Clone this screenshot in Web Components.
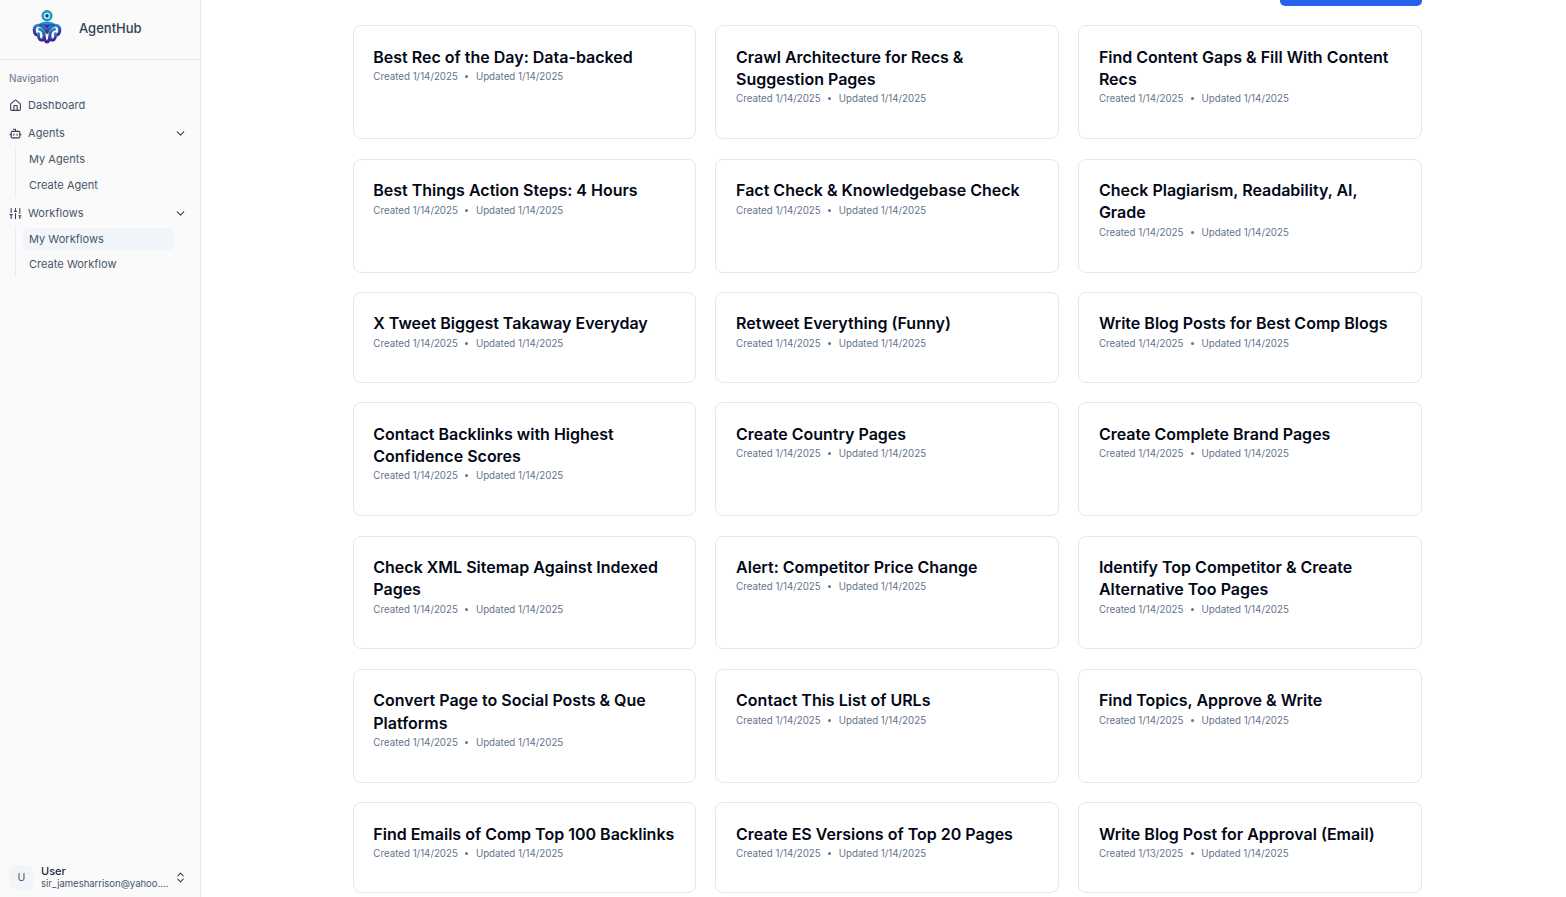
<!DOCTYPE html>
<html>
<head>
<meta charset="utf-8">
<title>AgentHub</title>
<style>
  html, body { margin: 0; height: 100%; overflow: hidden; background: #fff; }
  body { font-family: Inter, "Liberation Sans", sans-serif; }
</style>
</head>
<body>
<app-shell>
  <side-bar slot="side">
    <nav-item icon="home">Dashboard</nav-item>
    <nav-item icon="bot" chevron>Agents</nav-item>
    <nav-group>
      <nav-sub>My Agents</nav-sub>
      <nav-sub>Create Agent</nav-sub>
    </nav-group>
    <nav-item icon="sliders" chevron>Workflows</nav-item>
    <nav-group>
      <nav-sub active>My Workflows</nav-sub>
      <nav-sub>Create Workflow</nav-sub>
    </nav-group>
  </side-bar>
  <workflow-grid></workflow-grid>
</app-shell>

<script>
const ICONS = {
  home: `<path d="M15 21v-8a1 1 0 0 0-1-1h-4a1 1 0 0 0-1 1v8"/><path d="M3 10a2 2 0 0 1 .709-1.528l7-5.999a2 2 0 0 1 2.582 0l7 5.999A2 2 0 0 1 21 10v9a2 2 0 0 1-2 2H5a2 2 0 0 1-2-2z"/>`,
  bot: `<path d="M12 8V4H8"/><rect width="16" height="12" x="4" y="8" rx="2"/><path d="M2 14h2"/><path d="M20 14h2"/><path d="M15 13v2"/><path d="M9 13v2"/>`,
  sliders: `<path d="M4 21v-7M4 10V3M12 21v-9M12 8V3M20 21v-5M20 12V3M2 14h4M10 8h4M18 16h4"/>`,
  chevron: `<path d="m6 9 6 6 6-6"/>`,
  updown: `<path d="m7 15 5 5 5-5"/><path d="m7 9 5-5 5 5"/>`
};
const icon = (name, size) => `<svg width="${size}" height="${size}" viewBox="0 0 24 24" fill="none" stroke="currentColor" stroke-width="2" stroke-linecap="round" stroke-linejoin="round">${ICONS[name]}</svg>`;

customElements.define('app-shell', class extends HTMLElement{
  constructor(){
    super();
    this.shadow = this.attachShadow({mode: 'open'});
    this.shadow.innerHTML = `
      <style>
        :host{ display: flex; height: 897px; overflow: hidden; }
        main{ flex: 1; min-width: 0; padding: 0 144.300px 0 151.700px; }
      </style>
      <slot name="side"></slot>
      <main><slot></slot></main>
    `;
  }
});

customElements.define('side-bar', class extends HTMLElement{
  constructor(){
    super();
    this.shadow = this.attachShadow({mode: 'open'});
    this.shadow.innerHTML = `
      <style>
        :host{
          display: flex; flex-direction: column; flex: none; box-sizing: border-box;
          width: 201px; height: 897px; background: #fafafa; border-right: 1px solid #e2e8f0;
        }
        header{
          display: flex; align-items: center; gap: 17px; box-sizing: border-box;
          height: 60px; padding: 0 0 4px 32px; border-bottom: 1px solid #e2e8f0;
          font-size: 13px; font-weight: 500; color: #334155;
        }
        header svg{ margin-bottom: 3px; flex: none; }
        .label{ box-sizing: border-box; padding: 12px 9px 0; height: 30px; font-size: 9.900px; line-height: 13px; color: #64748b; }
        nav{ flex: 1; padding: 0 9px; display: flex; flex-direction: column; }
        footer{ display: flex; align-items: center; padding: 0 13px 0 9px; height: 40px; gap: 7px; color: #334155; }
        .avatar{
          width: 25px; height: 25px; flex: none; border-radius: 8px; background: #f1f5f9;
          display: flex; align-items: center; justify-content: center; font-size: 10.500px; color: #475569;
        }
        .who{ flex: 1; min-width: 0; }
        .name{ font-size: 11px; line-height: 12px; font-weight: 500; color: #1e293b; }
        .mail{ font-size: 9.500px; line-height: 13px; color: #475569; white-space: nowrap; }
        footer svg{ flex: none; display: block; }
      </style>
      <header>
        <svg width="30" height="37" viewBox="0 0 32 38">
          <defs>
            <linearGradient id="lg" x1="0" y1="0" x2="0" y2="1">
              <stop offset="0" stop-color="#2a8fc9"/>
              <stop offset="0.5" stop-color="#2748a8"/>
              <stop offset="1" stop-color="#43209a"/>
            </linearGradient>
          </defs>
          <circle cx="16" cy="7.500" r="6" fill="#1d9cc4"/>
          <circle cx="16" cy="7.500" r="3.300" fill="#d9f0f8"/>
          <circle cx="16" cy="7.500" r="1.900" fill="#0e3f7a"/>
          <path d="M11 15q5-2.500 10 0l2 5h-14z" fill="#2a86c4"/>
          <g fill="none" stroke="url(#lg)" stroke-width="3.200" stroke-linecap="round">
            <path d="M16 25C13 19 8 16.500 5 18 2.500 19.500 2 23 3 26c.7 2 3 2.800 4 1"/>
            <path d="M16 25c3-6 8-8.500 11-7 2.500 1.500 3 5 2 8-.7 2-3 2.800-4 1"/>
            <path d="M8 22c3 .5 5 3.500 5 7.500 0 3 1.500 6 3 6s3-3 3-6c0-4 2-7 5-7.500"/>
            <path d="M9 17c3-2 5-1 7 2 2-3 4-4 7-2"/>
            <path d="M7 27c-.500 3 .500 6 3 6.500 2 .300 3-1 2.500-2.500"/>
            <path d="M25 27c.500 3-.500 6-3 6.500-2 .300-3-1-2.500-2.500"/>
          </g>
        </svg>
        <span>AgentHub</span>
      </header>
      <div class="label">Navigation</div>
      <nav><slot></slot></nav>
      <footer>
        <div class="avatar">U</div>
        <div class="who">
          <div class="name">User</div>
          <div class="mail">sir_jamesharrison@yahoo....</div>
        </div>
        ${icon('updown', 13)}
      </footer>
    `;
  }
});

customElements.define('nav-item', class extends HTMLElement{
  constructor(){
    super();
    this.shadow = this.attachShadow({mode: 'open'});
    this.shadow.innerHTML = `
      <style>
        :host{
          display: flex; align-items: center; gap: 6px; height: 26px; margin-top: 2px; flex: none;
          font-size: 11px; color: #475569; letter-spacing: 0.05px;
        }
        span{ flex: 1; }
        svg{ display: block; flex: none; color: #334155; }
        .chev{ margin-right: 4px; }
      </style>
      ${icon(this.getAttribute('icon'), 13)}
      <span><slot></slot></span>
      ${this.hasAttribute('chevron') ? icon('chevron', 13).replace('<svg', '<svg class="chev"') : ''}
    `;
  }
});

customElements.define('nav-group', class extends HTMLElement{
  constructor(){
    super();
    this.shadow = this.attachShadow({mode: 'open'});
    this.shadow.innerHTML = `
      <style>
        :host{
          display: flex; flex-direction: column; margin-left: 6px; padding-left: 7px;
          border-left: 1px solid #e8ecf1; width: 151px; box-sizing: content-box;
        }
      </style>
      <slot></slot>
    `;
  }
});

customElements.define('nav-sub', class extends HTMLElement{
  constructor(){
    super();
    this.shadow = this.attachShadow({mode: 'open'});
    this.shadow.innerHTML = `
      <style>
        :host{
          display: flex; align-items: center; height: 26px; padding-left: 6px;
          font-size: 11px; color: #475569; letter-spacing: 0.03px;
        }
        :host([active]){ height: 22px; margin: 2px 0 1px; background: #f1f5f9; border-radius: 5px; }
      </style>
      <slot></slot>
    `;
  }
});

customElements.define('workflow-card', class extends HTMLElement{
  constructor(){
    super();
    this.shadow = this.attachShadow({mode: 'open'});
    this.shadow.innerHTML = `
      <style>
        :host{
          display: block; box-sizing: border-box; padding: 19.500px 19.600px; background: #fff;
          border: 1px solid #e2e8f0; border-radius: 8px;
        }
        h3{ margin: 0; font-size: 16px; line-height: 22.200px; font-weight: 600; color: #020817; }
        .meta{ display: flex; align-items: center; height: 17.400px; font-size: 9.750px; color: #64748b; white-space: nowrap; }
        i{ width: 3px; height: 3px; border-radius: 50%; background: #64748b; margin: 0 7.500px; }
      </style>
      <h3><slot></slot></h3>
      <div class="meta">
        <span id="created"></span><i></i><span id="updated"></span>
      </div>
    `;
  }

  connectedCallback(){
    this.shadow.querySelector('#created').textContent = 'Created ' + this.getAttribute('created');
    this.shadow.querySelector('#updated').textContent = 'Updated ' + this.getAttribute('updated');
  }
});

const WORKFLOWS = [
  'Best Rec of the Day: Data-backed', 'Crawl Architecture for Recs & Suggestion Pages', 'Find Content Gaps & Fill With Content Recs',
  'Best Things Action Steps: 4 Hours', 'Fact Check & Knowledgebase Check', 'Check Plagiarism, Readability, AI, Grade',
  'X Tweet Biggest Takaway Everyday', 'Retweet Everything (Funny)', 'Write Blog Posts for Best Comp Blogs',
  'Contact Backlinks with Highest Confidence Scores', 'Create Country Pages', 'Create Complete Brand Pages',
  'Check XML Sitemap Against Indexed Pages', 'Alert: Competitor Price Change', 'Identify Top Competitor & Create Alternative Too Pages',
  'Convert Page to Social Posts & Que Platforms', 'Contact This List of URLs', 'Find Topics, Approve & Write',
  'Find Emails of Comp Top 100 Backlinks', 'Create ES Versions of Top 20 Pages', 'Write Blog Post for Approval (Email)'
];

customElements.define('workflow-grid', class extends HTMLElement{
  constructor(){
    super();
    this.shadow = this.attachShadow({mode: 'open'});
    this.shadow.innerHTML = `
      <style>
        :host{ display: block; }
        .bar{ display: flex; justify-content: flex-end; height: 25.400px; }
        .btn{ width: 142px; height: 6px; background: #2563eb; border-radius: 0 0 5px 5px; }
        .grid{
          display: grid; grid-template-columns: repeat(3, 1fr); gap: 19.400px 19.400px;
          grid-template-rows: 113.900px 113.900px 90.900px 113.900px 113.900px 113.900px 90.900px;
        }
      </style>
      <div class="bar"><div class="btn"></div></div>
      <div class="grid"><slot></slot></div>
    `;
  }

  connectedCallback(){
    WORKFLOWS.forEach((title, i) => {
      const card = document.createElement('workflow-card');
      card.setAttribute('created', i === 20 ? '1/13/2025' : '1/14/2025');
      card.setAttribute('updated', '1/14/2025');
      card.textContent = title;
      this.appendChild(card);
    });
  }
});
</script>
</body>
</html>
